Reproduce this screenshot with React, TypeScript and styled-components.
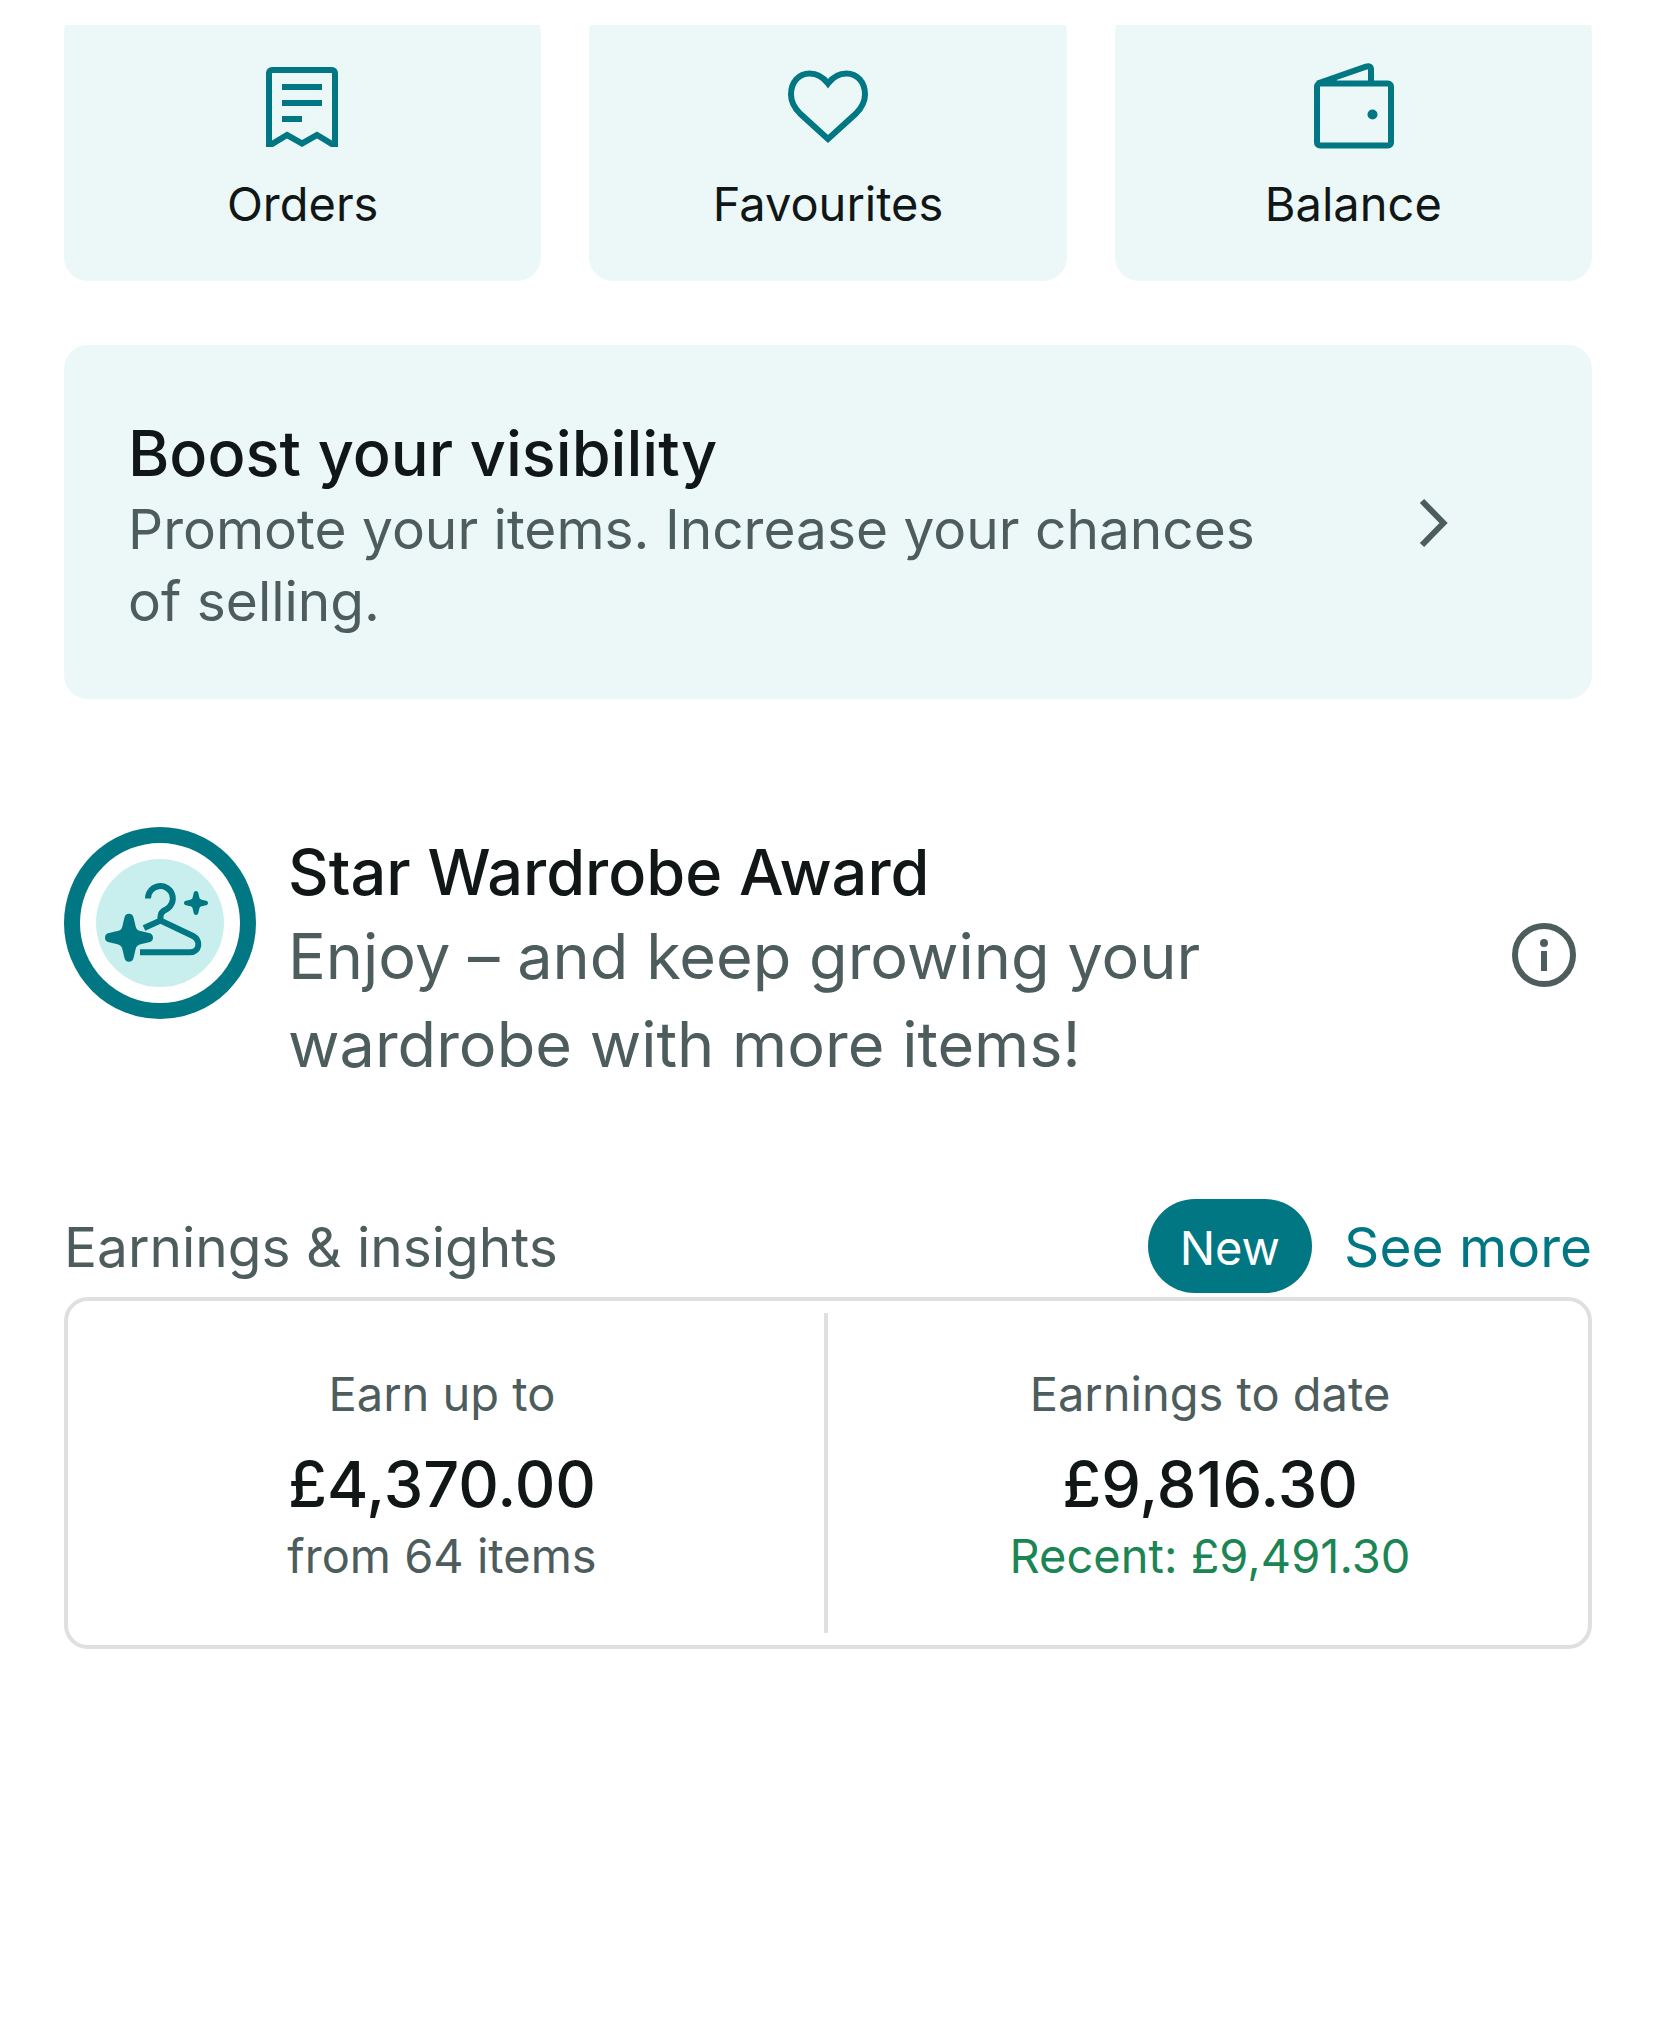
import React from "react";
import styled, { createGlobalStyle } from "styled-components";

const color = {
  teal: "#007782",
  tint: "#ecf8f8",
  mint: "#c8efed",
  ink: "#111617",
  grey: "#4d5c5c",
  green: "#1c8554",
  line: "#dfdfdf",
};

const GlobalStyle = createGlobalStyle`
  *, *::before, *::after { box-sizing: border-box; }
  body {
    margin: 0;
    background: #fff;
    color: ${color.ink};
    font-family: Inter, "Liberation Sans", sans-serif;
  }
  h2, p { margin: 0; }
  button { border: 0; margin: 0; font: inherit; color: inherit; text-align: left; cursor: pointer; }
  svg { display: block; flex: none; }
`;

const Page = styled.main`
  display: flex;
  flex-direction: column;
  padding: 25px 64px 64px;
`;

const TileViewport = styled.nav`
  overflow: hidden;
`;

const Tiles = styled.div`
  display: grid;
  grid-template-columns: repeat(3, 1fr);
  gap: 48px;
  margin-top: -16px;
`;

const Tile = styled.button`
  display: flex;
  flex-direction: column;
  align-items: center;
  gap: 21px;
  padding: 48px 16px 47px;
  border-radius: 24px;
  background: ${color.tint};
`;

const Text = styled.p<{ $size: 47 | 55 | 63; $line: number; $tone?: string }>`
  font-size: ${(p) => p.$size}px;
  line-height: ${(p) => p.$line}px;
  color: ${(p) => p.$tone ?? color.ink};
`;

const TileLabel = styled.span`
  font-size: 47px;
  line-height: 60px;
`;

const Title = styled.h2`
  font-size: 63px;
  line-height: 80px;
  font-weight: 500;
`;

const Promo = styled.button`
  display: flex;
  align-items: center;
  gap: 96px;
  margin-top: 64px;
  padding: 68px 128px 62px 64px;
  border-radius: 24px;
  background: ${color.tint};
`;

const Grow = styled.div`
  flex: 1;
  min-width: 0;
`;

const Award = styled.section`
  display: flex;
  align-items: flex-start;
  gap: 32px;
  margin-top: 128px;
`;

const AwardText = styled(Grow)`
  padding: 5px 0 1px;
`;

const InfoButton = styled.button`
  align-self: center;
  padding: 0;
  background: none;
`;

const InsightsHeader = styled.header`
  display: flex;
  align-items: center;
  gap: 32px;
  margin-top: 110px;
`;

const SectionName = styled.h2`
  flex: 1;
  padding-top: 2px;
  font-size: 55px;
  line-height: 72px;
  font-weight: 400;
  color: ${color.grey};
`;

const Pill = styled.span`
  padding: 17px 32px 13px;
  border-radius: 48px;
  background: ${color.teal};
  color: #fff;
  font-size: 47px;
  line-height: 64px;
`;

const MoreLink = styled.a`
  padding-top: 2px;
  font-size: 55px;
  line-height: 72px;
  color: ${color.teal};
  text-decoration: none;
`;

const Stats = styled.section`
  display: flex;
  gap: 16px;
  margin-top: 4px;
  padding: 12px 12px 12px 8px;
  border: 4px solid ${color.line};
  border-radius: 24px;
`;

const Stat = styled.div`
  flex: 1;
  display: flex;
  flex-direction: column;
  align-items: center;
  padding: 49px 0 45px;
`;

const Divider = styled.div`
  width: 4px;
  background: ${color.line};
`;

const Amount = styled.strong`
  margin-top: 18px;
  font-size: 63px;
  line-height: 80px;
  font-weight: 500;
`;

const ReceiptIcon = () => (
  <svg width="96" height="96" viewBox="1 0 96 96" fill={color.teal} aria-hidden="true">
    <path
      fillRule="evenodd"
      d="M12 90V16a6 6 0 0 1 6-6h60a6 6 0 0 1 6 6v74h-7L63 81.5 48 90 33 81.5 19 90zM18 16h60v67.5L63 74.5 48 83 33 74.5 18 83.5z"
    />
    <path d="M28 27h40v6H28zM28 43h40v6H28zM28 59h20v6H28z" />
  </svg>
);

const HeartIcon = () => (
  <svg width="96" height="96" viewBox="0 0 96 96" fill="none" stroke={color.teal} strokeWidth="6" aria-hidden="true">
    <path d="M48 82 20 56.5C13.5 50 11 44 11 37.5 11 25 19 16.5 29.5 16.5 37.5 16.5 43.5 20.5 48 26.5 52.5 20.5 58.5 16.5 66.5 16.5 77 16.5 85 25 85 37.5 85 44 82.5 50 76 56.5z" />
  </svg>
);

const WalletIcon = () => (
  <svg width="96" height="96" viewBox="0 0 96 96" fill="none" stroke={color.teal} strokeWidth="6" aria-hidden="true">
    <rect x="12" y="26.5" width="74" height="62" rx="3" />
    <path d="M12.5 26.5 61 9.6Q66 8 66 12.5V26" />
    <path d="M13 25 30 19.5 32 24 14 28z" stroke="none" fill={color.teal} />
    <circle cx="67.5" cy="57.5" r="5" fill={color.teal} stroke="none" />
  </svg>
);

const ChevronIcon = () => (
  <svg width="64" height="64" viewBox="0 0 64 64" fill="none" stroke={color.grey} strokeWidth="6" aria-hidden="true">
    <path d="M22 8 43.5 30 22 52" />
  </svg>
);

const InfoIcon = () => (
  <svg width="96" height="96" viewBox="0 0 96 96" fill={color.grey} aria-hidden="true">
    <circle cx="48" cy="45" r="29" fill="none" stroke={color.grey} strokeWidth="6" />
    <circle cx="48" cy="33" r="4" />
    <path d="M45 41h6v20h-6z" />
  </svg>
);

const STAR =
  "M0-24C2.5-24 4-22.5 4.6-20L6.6-11.5C7.3-8.6 8.6-7.3 11.5-6.6L20-4.6C22.5-4 24-2.5 24 0S22.5 4 20 4.6L11.5 6.6C8.6 7.3 7.3 8.6 6.6 11.5L4.6 20C4 22.5 2.5 24 0 24S-4 22.5-4.6 20L-6.6 11.5C-7.3 8.6-8.6 7.3-11.5 6.6L-20 4.6C-22.5 4-24 2.5-24 0S-22.5-4-20-4.6L-11.5-6.6C-8.6-7.3-7.3-8.6-6.6-11.5L-4.6-20C-4-22.5-2.5-24 0-24Z";

const AwardBadge = () => (
  <svg width="192" height="192" viewBox="0 0 192 192" fill="none" aria-hidden="true">
    <circle cx="96" cy="96" r="88" stroke={color.teal} strokeWidth="16" />
    <circle cx="96" cy="96" r="64" fill={color.mint} />
    <g stroke={color.teal} strokeWidth="6">
      <path d="M84 71.5a12.4 12.4 0 1 1 18 11q-5.5 2.5-5.5 7V95" />
      <path d="M80 101 96.5 93.5 129 109C137 113 136 125.3 126 125.3H76" />
    </g>
    <path d={STAR} transform="translate(65 110.7)" fill={color.teal} />
    <path d={STAR} transform="translate(132 76) scale(.5)" fill={color.teal} />
  </svg>
);

const tiles = [
  { label: "Orders", Icon: ReceiptIcon },
  { label: "Favourites", Icon: HeartIcon },
  { label: "Balance", Icon: WalletIcon },
];

export default function App() {
  return (
    <>
      <GlobalStyle />
      <Page>
        <TileViewport>
          <Tiles>
            {tiles.map(({ label, Icon }) => (
              <Tile key={label} type="button">
                <Icon />
                <TileLabel>{label}</TileLabel>
              </Tile>
            ))}
          </Tiles>
        </TileViewport>

        <Promo type="button">
          <Grow>
            <Title>Boost your visibility</Title>
            <Text $size={55} $line={72} $tone={color.grey}>
              Promote your items. Increase your chances of selling.
            </Text>
          </Grow>
          <ChevronIcon />
        </Promo>

        <Award>
          <AwardBadge />
          <AwardText>
            <Title>Star Wardrobe Award</Title>
            <Text $size={63} $line={88} $tone={color.grey}>
              Enjoy – and keep growing your wardrobe with more items!
            </Text>
          </AwardText>
          <InfoButton type="button" aria-label="About this award">
            <InfoIcon />
          </InfoButton>
        </Award>

        <InsightsHeader>
          <SectionName>Earnings &amp; insights</SectionName>
          <Pill>New</Pill>
          <MoreLink href="#insights">See more</MoreLink>
        </InsightsHeader>
        <Stats id="insights">
          <Stat>
            <Text $size={47} $line={64} $tone={color.grey}>Earn up to</Text>
            <Amount>£4,370.00</Amount>
            <Text $size={47} $line={64} $tone={color.grey}>from 64 items</Text>
          </Stat>
          <Divider />
          <Stat>
            <Text $size={47} $line={64} $tone={color.grey}>Earnings to date</Text>
            <Amount>£9,816.30</Amount>
            <Text $size={47} $line={64} $tone={color.green}>Recent: £9,491.30</Text>
          </Stat>
        </Stats>
      </Page>
    </>
  );
}
